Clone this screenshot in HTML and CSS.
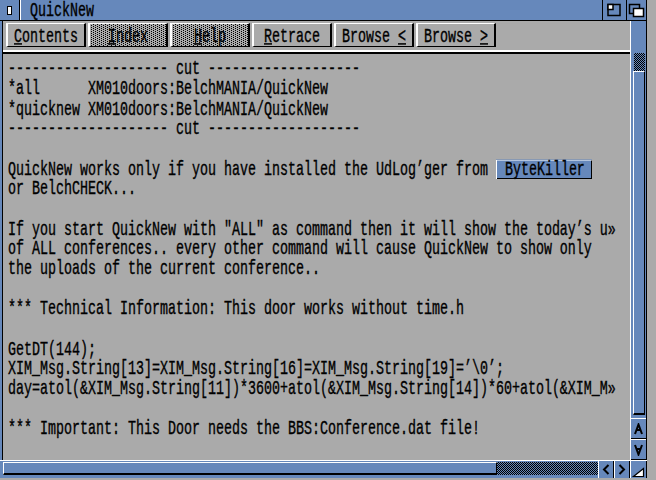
FILE: index.html
```html
<!DOCTYPE html>
<html>
<head>
<meta charset="utf-8">
<link rel="stylesheet" href="styles.css">
</head>
<body>
<div class="window">
  <div class="titlebar">
    <div class="close"><span class="closebox"></span></div>
    <div class="title"><span class="lbl">QuickNew</span></div>
    <div class="gad zoom">
      <svg width="23" height="20" viewBox="0 0 23 20"><rect x="5" y="4.5" width="12" height="11" fill="none" stroke="#000" stroke-width="1.5"/><rect x="5" y="4.5" width="5" height="5" fill="#fff" stroke="#000" stroke-width="1.5"/></svg>
    </div>
    <div class="gad depth">
      <svg width="19" height="20" viewBox="0 0 19 20"><rect x="2.5" y="4.5" width="10" height="9" fill="#6688bb" stroke="#000" stroke-width="1.5"/><rect x="6.5" y="8.5" width="10" height="8" fill="#fff" stroke="#000" stroke-width="1.5"/></svg>
    </div>
  </div>
  <div class="main">
    <div class="lborder"></div>
    <div class="inner">
      <div class="buttons">
        <div class="btn"><span class="lbl"><u>C</u>ontents</span></div>
        <div class="btn off"><span class="lbl"><u>I</u>ndex</span></div>
        <div class="btn off"><span class="lbl"><u>H</u>elp</span></div>
        <div class="btn"><span class="lbl"><u>R</u>etrace</span></div>
        <div class="btn"><span class="lbl">Browse <u>&lt;</u></span></div>
        <div class="btn"><span class="lbl">Browse <u>&gt;</u></span></div>
      </div>
      <div class="sep"></div>
      <div class="content">
<pre class="text">
-------------------- cut -------------------
*all      XM010doors:BelchMANIA/QuickNew
*quicknew XM010doors:BelchMANIA/QuickNew
-------------------- cut -------------------

QuickNew works only if you have installed the UdLog’ger from <span class="link">ByteKiller</span>
or BelchCHECK...

If you start QuickNew with "ALL" as command then it will show the today’s u»
of ALL conferences.. every other command will cause QuickNew to show only
the uploads of the current conference..

*** Technical Information: This door works without time.h

GetDT(144);
XIM_Msg.String[13]=XIM_Msg.String[16]=XIM_Msg.String[19]=’\0’;
day=atol(&amp;XIM_Msg.String[11])*3600+atol(&amp;XIM_Msg.String[14])*60+atol(&amp;XIM_M»

*** Important: This Door needs the BBS:Conference.dat file!
</pre>
      </div>
    </div>
    <div class="vscroll">
      <div class="vtrack"><div class="vknob"></div></div>
      <div class="varrow">
        <svg width="9" height="12" viewBox="0 0 9 12"><path d="M1 11 L4.5 1.5 L8 11 M2.5 7 H6.5" fill="none" stroke="#000" stroke-width="2"/></svg>
      </div>
      <div class="varrow">
        <svg width="9" height="12" viewBox="0 0 9 12"><path d="M1 1 L4.5 10.5 L8 1 M2.5 5 H6.5" fill="none" stroke="#000" stroke-width="2"/></svg>
      </div>
    </div>
  </div>
  <div class="bottom">
    <div class="hscroll"><div class="htrack"><div class="hknob"></div></div></div>
    <div class="harrow">
      <svg width="8" height="11" viewBox="0 0 8 11"><path d="M6.5 1 L2 5.5 L6.5 10" fill="none" stroke="#000" stroke-width="2"/></svg>
    </div>
    <div class="harrow">
      <svg width="8" height="11" viewBox="0 0 8 11"><path d="M1.5 1 L6 5.5 L1.5 10" fill="none" stroke="#000" stroke-width="2"/></svg>
    </div>
    <div class="size">
      <svg width="15" height="14" viewBox="0 0 15 14"><polygon points="12.5,4.5 12.5,12.5 2.5,12.5" fill="#fff" stroke="#000" stroke-width="1.2"/></svg>
    </div>
  </div>
</div>
</body>
</html>
```
FILE: styles.css
```css
html, body {
  margin: 0;
  padding: 0;
  background: #aaaaaa;
  font-family: "Liberation Mono", "DejaVu Sans Mono", monospace;
  color: #000;
}

.window {
  width: 647px;
  height: 478px;
  display: flex;
  flex-direction: column;
  background: #6688bb;
}

.lbl {
  display: inline-block;
  font-size: 13.333px;
  line-height: 13.333px;
  white-space: pre;
  transform: scaleY(1.5);
  -webkit-text-stroke: 0.25px #000;
}

.lbl u {
  text-decoration-thickness: 1px;
  text-underline-offset: 1px;
}

/* title bar */
.titlebar {
  flex: none;
  height: 20px;
  display: flex;
  border-bottom: 1px solid #000;
}

.close {
  width: 19px;
  border-right: 1px solid #000;
  display: flex;
  align-items: center;
  justify-content: center;
}

.closebox {
  width: 3px;
  height: 7px;
  border: 1px solid #000;
  border-width: 1px 1.5px;
  background: #fff;
}

.title {
  flex: 1;
  border-left: 1px solid #fff;
  padding: 2px 0 0 9px;
  display: flex;
  align-items: center;
}

.gad {
  border-left: 1px solid #000;
  display: flex;
}

.zoom { width: 23px; }
.depth { width: 19px; border-right: 1px solid #000; }

/* main area */
.main {
  flex: 1;
  display: flex;
  min-height: 0;
}

.lborder {
  width: 2px;
  border-right: 1px solid #000;
}

.inner {
  flex: 1;
  display: flex;
  flex-direction: column;
  background: #aaaaaa;
  min-width: 0;
}

.buttons {
  flex: none;
  height: 27px;
  padding: 2px 0 0 3px;
  display: flex;
  gap: 2px;
}

.btn {
  box-sizing: border-box;
  width: 80px;
  height: 24px;
  padding-top: 3px;
  border-style: solid;
  border-width: 1px 2px;
  border-color: #fff #000 #000 #fff;
  display: flex;
  align-items: center;
  justify-content: center;
}

.btn.off {
  background:
    linear-gradient(90deg, #aaaaaa 1px, transparent 1px) 0 0 / 2px 2px,
    conic-gradient(#000 25%, transparent 0 50%, #000 0 75%, transparent 0) 0 0 / 4px 2px,
    #aaaaaa;
}

.sep {
  flex: none;
  height: 0;
  border-top: 2px solid #fff;
  border-bottom: 2px solid #000;
}

.content {
  flex: 1;
  overflow: hidden;
  padding: 5px 0 0 5px;
}

.text {
  margin: 0;
  font-family: "Liberation Mono", "DejaVu Sans Mono", monospace;
  font-size: 13.333px;
  line-height: 13.333px;
  white-space: pre;
  transform: scaleY(1.5);
  transform-origin: 0 0;
  -webkit-text-stroke: 0.25px #000;
}

.link {
  display: inline-block;
  height: 13.333px;
  padding: 0 7px 0 9px;
  background: #6688bb;
  box-shadow: inset 1px 0.67px 0 #fff, inset -1px -0.67px 0 #000;
}

/* vertical scroller */
.vscroll {
  width: 15px;
  border-left: 1px solid #fff;
  border-right: 1px solid #000;
  display: flex;
  flex-direction: column;
}

.vtrack {
  flex: 1;
  margin: 32px 1px 3px 3px;
  padding-top: 18px;
  display: flex;
  flex-direction: column;
  background-image: repeating-conic-gradient(#000 0 25%, #6688bb 0 50%);
  background-size: 2px 2px;
}

.vknob {
  flex: 1;
  margin-left: -1px;
  background: #6688bb;
  border-style: solid;
  border-width: 1px 1px 2px 1px;
  border-color: #fff #000 #000 #fff;
}

.varrow {
  box-sizing: border-box;
  height: 21px;
  border-top: 1px solid #fff;
  border-bottom: 1px solid #000;
  display: flex;
  align-items: center;
  justify-content: center;
}

/* bottom scroller */
.bottom {
  flex: none;
  height: 17px;
  border-top: 1px solid #fff;
  display: flex;
}

.hscroll {
  flex: 1;
  padding: 1px 0 3px 3px;
  display: flex;
}

.htrack {
  flex: 1;
  display: flex;
  background-image: repeating-conic-gradient(#000 0 25%, #6688bb 0 50%);
  background-size: 2px 2px;
}

.hknob {
  box-sizing: border-box;
  width: 494px;
  background: #6688bb;
  border-style: solid;
  border-width: 1px 1px 2px 1px;
  border-color: #fff #000 #000 #fff;
}

.harrow {
  width: 14px;
  border-left: 1px solid #fff;
  border-right: 1px solid #000;
  display: flex;
  align-items: center;
  justify-content: center;
}

.size {
  width: 15px;
  border-left: 1px solid #fff;
  border-right: 1px solid #000;
  display: flex;
  align-items: flex-end;
  justify-content: center;
}
```
